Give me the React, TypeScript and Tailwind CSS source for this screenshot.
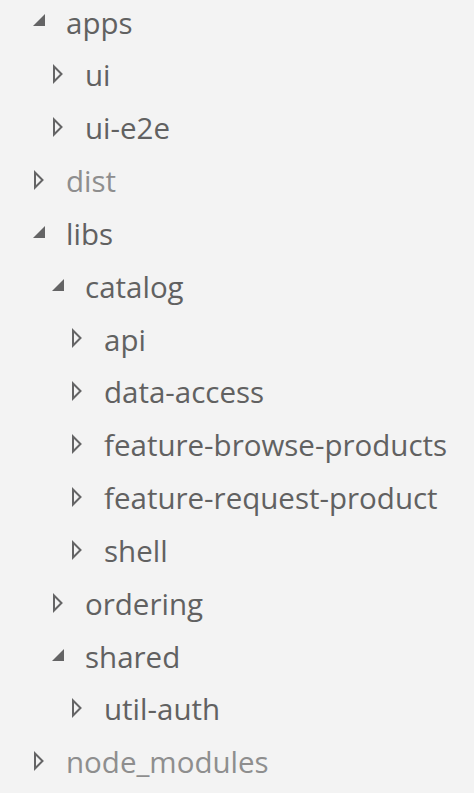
import React from "react";

type Node = { name: string; level: number; open?: boolean; dim?: boolean };

const tree: Node[] = [
  { name: "apps", level: 0, open: true },
  { name: "ui", level: 1 },
  { name: "ui-e2e", level: 1 },
  { name: "dist", level: 0, dim: true },
  { name: "libs", level: 0, open: true },
  { name: "catalog", level: 1, open: true },
  { name: "api", level: 2 },
  { name: "data-access", level: 2 },
  { name: "feature-browse-products", level: 2 },
  { name: "feature-request-product", level: 2 },
  { name: "shell", level: 2 },
  { name: "ordering", level: 1 },
  { name: "shared", level: 1, open: true },
  { name: "util-auth", level: 2 },
  { name: "node_modules", level: 0, dim: true },
];

const indent = ["pl-[27px]", "pl-[46px]", "pl-[65px]"];

function Twistie({ open }: { open?: boolean }) {
  if (open) {
    return (
      <svg width="24" height="24" viewBox="0 0 24 24" className="-mt-[5px]">
        <path d="M6 18 L18 18 L18 6 Z" fill="#646465" />
      </svg>
    );
  }
  return (
    <svg width="24" height="24" viewBox="0 0 24 24" className="-mt-[3px]">
      <path
        d="M8 4.5 L15.5 12 L8 19.5 Z"
        fill="none"
        stroke="#646465"
        strokeWidth="2"
        strokeLinejoin="miter"
      />
    </svg>
  );
}

export default function App() {
  return (
    <div className="min-h-screen w-full bg-[#f3f3f3] overflow-hidden">
      <div className="-mt-[3.5px] flex flex-col">
        {tree.map((n) => (
          <div
            key={n.name}
            className={`flex h-[52.85px] items-center ${indent[n.level]}`}
          >
            <Twistie open={n.open} />
            <span
              className={`ml-[15px] whitespace-nowrap text-[29.5px] leading-[52.85px] ${
                n.dim ? "text-[#8e8e8e]" : "text-[#616161]"
              }`}
              style={{ fontFamily: '"Open Sans", "Noto Sans", sans-serif' }}
            >
              {n.name}
            </span>
          </div>
        ))}
      </div>
    </div>
  );
}
